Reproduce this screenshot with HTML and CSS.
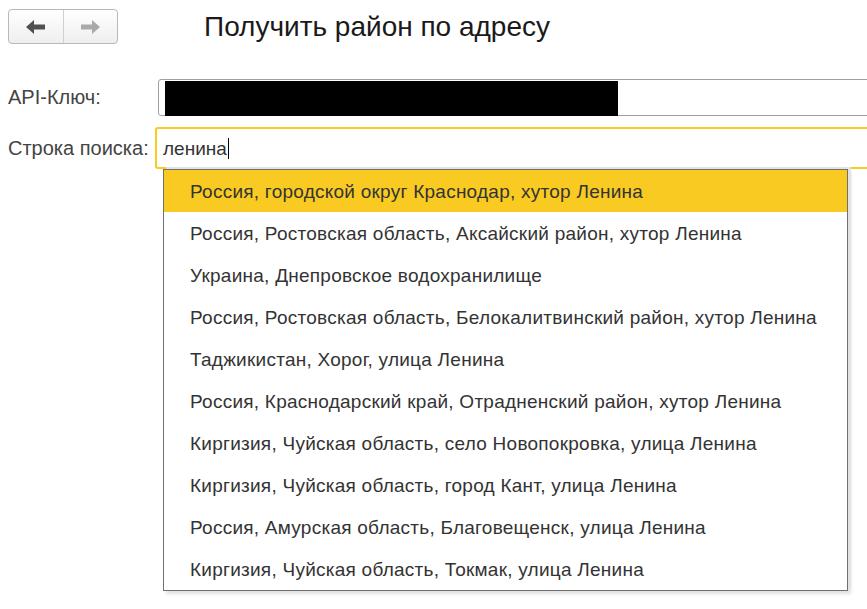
FILE: index.html
```html
<!DOCTYPE html>
<html lang="ru">
<head>
<meta charset="utf-8">
<title>Получить район по адресу</title>
<link rel="stylesheet" href="styles.css">
</head>
<body>
<div class="page">
  <div class="toolbar">
    <div class="nav">
      <button class="nav-btn back" aria-label="Назад">
        <svg width="20" height="16" viewBox="0 0 20 16"><path d="M0 8 L8 1 L8 5.5 L19 5.5 L19 10.5 L8 10.5 L8 15 Z" fill="#505050"/></svg>
      </button>
      <button class="nav-btn fwd" aria-label="Вперёд">
        <svg width="20" height="16" viewBox="0 0 20 16"><path d="M20 8 L12 1 L12 5.5 L1 5.5 L1 10.5 L12 10.5 L12 15 Z" fill="#a9a9a9"/></svg>
      </button>
    </div>
    <h1 class="title">Получить район по адресу</h1>
  </div>

  <div class="form">
    <div class="row row-key">
      <label class="label">API-Ключ:</label>
      <div class="field field-key"><div class="redacted"></div></div>
    </div>
    <div class="row row-search">
      <label class="label">Строка поиска:</label>
      <div class="field field-search"><span class="value">ленина</span><span class="caret"></span></div>
    </div>
  </div>

  <ul class="dropdown">
    <li class="item active">Россия, городской округ Краснодар, хутор Ленина</li>
    <li class="item">Россия, Ростовская область, Аксайский район, хутор Ленина</li>
    <li class="item">Украина, Днепровское водохранилище</li>
    <li class="item">Россия, Ростовская область, Белокалитвинский район, хутор Ленина</li>
    <li class="item">Таджикистан, Хорог, улица Ленина</li>
    <li class="item">Россия, Краснодарский край, Отрадненский район, хутор Ленина</li>
    <li class="item">Киргизия, Чуйская область, село Новопокровка, улица Ленина</li>
    <li class="item">Киргизия, Чуйская область, город Кант, улица Ленина</li>
    <li class="item">Россия, Амурская область, Благовещенск, улица Ленина</li>
    <li class="item">Киргизия, Чуйская область, Токмак, улица Ленина</li>
  </ul>
</div>
</body>
</html>
```

FILE: styles.css
```css
html, body {
  margin: 0;
  padding: 0;
  background: #fff;
  overflow: hidden;
}
body {
  font-family: Arial, "Liberation Sans", sans-serif;
  color: #404040;
  width: 867px;
  height: 609px;
}
.page {
  position: relative;
  width: 867px;
  height: 609px;
}
.toolbar {
  display: flex;
  align-items: center;
  padding: 9px 0 0 8px;
  height: 35px;
}
.nav {
  display: flex;
  width: 110px;
  height: 35px;
  box-sizing: border-box;
  border: 1px solid #b8b8b8;
  border-radius: 4px;
  background: linear-gradient(#ffffff, #eeeeee);
  overflow: hidden;
}
.nav-btn {
  flex: 1;
  border: 0;
  background: transparent;
  padding: 0;
  display: flex;
  align-items: center;
  justify-content: center;
}
.nav-btn.back {
  border-right: 1px solid #d0d0d0;
}
.title {
  margin: 0 0 0 86px;
  font-size: 28px;
  font-weight: normal;
  color: #1a1a1a;
}
.form {
  padding: 35px 0 0 8px;
}
.row {
  display: flex;
  align-items: center;
}
.label {
  font-size: 20px;
  color: #444;
}
.row-key {
  height: 37px;
}
.row-key .label {
  width: 150px;
}
.field-key {
  flex: 1;
  height: 37px;
  box-sizing: border-box;
  border: 1px solid #a0a0a0;
  border-radius: 3px 0 0 3px;
  margin-right: -20px;
  padding: 1px 0 0 6px;
}
.redacted {
  width: 453px;
  height: 35px;
  background: #000;
}
.row-search {
  margin-top: 11px;
  height: 42px;
}
.row-search .label {
  width: 147px;
}
.field-search {
  flex: 1;
  height: 42px;
  box-sizing: border-box;
  border: 2px solid #f8cb1e;
  border-radius: 3px 0 0 3px;
  margin-right: -20px;
  display: flex;
  align-items: center;
  padding: 1px 0 0 6px;
}
.value {
  font-size: 19px;
  color: #333;
}
.caret {
  display: inline-block;
  width: 1px;
  height: 21px;
  background: #000;
  margin-left: 1px;
}
.dropdown {
  position: absolute;
  left: 163px;
  top: 169px;
  width: 685px;
  margin: 0;
  padding: 0;
  list-style: none;
  box-sizing: border-box;
  border: 1px solid #707070;
  background: #fff;
  box-shadow: 3px -2px 0 #e3e3e3, 3px 3px 3px rgba(0,0,0,0.12);
}
.item {
  height: 42px;
  box-sizing: border-box;
  padding: 2px 0 0 26px;
  line-height: 40px;
  font-size: 19px;
  letter-spacing: 0.25px;
  color: #333;
  white-space: nowrap;
}
.item.active {
  background: #f9cb22;
  color: #333;
}
```
